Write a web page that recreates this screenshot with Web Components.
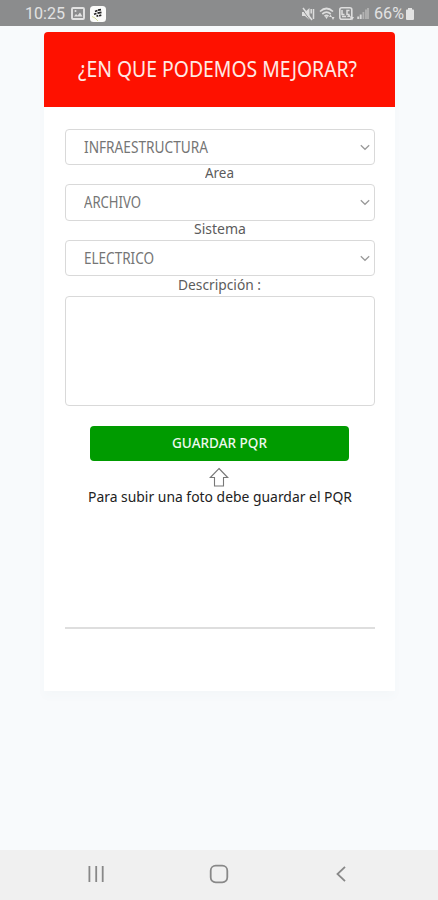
<!DOCTYPE html>
<html lang="es">
<head>
<meta charset="utf-8">
<title>PQR</title>
<style>
html,body{margin:0;height:100%;background:#f8fafc;overflow:hidden}
</style>
</head>
<body>
<pqr-app></pqr-app>
<script>
const define = (name, html, ready) => customElements.define(name, class extends HTMLElement {
  connectedCallback() {
    if (this.shadowRoot) return;
    this.attachShadow({ mode: 'open' }).innerHTML = html;
    if (ready) ready(this, this.shadowRoot);
  }
});

// Text condensed horizontally to the width in its "w" attribute.
define('fit-text', `<style>
:host{display:flex;white-space:nowrap;justify-content:flex-start}
span{display:block;flex:none;transform-origin:0 50%}
</style><span><slot></slot></span>`, (host, root) => {
  const span = root.querySelector('span'), w = +host.getAttribute('w');
  host.style.width = w + 'px';
  span.style.transform = `scaleX(${w / span.getBoundingClientRect().width})`;
});

define('status-bar', `<style>
:host{display:flex;height:26px;box-sizing:border-box;padding:1px 23px 0 25px;align-items:center;background:#8b8c8d;color:#e2e2e2;font:16px/25px Roboto,sans-serif}
svg{display:block;flex:none}
.sp{flex:1}
</style>
<fit-text w="40">10:25</fit-text>
<svg style="margin-left:6px" width="14" height="13" viewBox="0 0 14 13"><rect x="1" y="1" width="12" height="11" rx="1" fill="none" stroke="#e2e2e2" stroke-width="1.9"/><path d="M3 9.500l2-2.500 1.600 1.500L9 5.500l2.500 4z" fill="#e2e2e2"/><circle cx="4.500" cy="4" r="1" fill="#e2e2e2"/></svg>
<svg style="margin-left:5px" width="16" height="16" viewBox="0 0 16 16"><rect width="16" height="16" rx="3.500" fill="#fbfbfa"/><path d="M5 5.500l2.500-1M8 4.200l3-.6M4 8.300l2.500-.8M7.500 7.200l4-.8M6.500 10.300l1.700-.7M9 9.800l2.300-.7" stroke="#222" stroke-width="1.700"/><path d="M2 10.500l3 1.500 3 3" stroke="#d5dd9a" fill="none"/></svg>
<span class="sp"></span>
<svg width="14" height="14" viewBox="0 0 14 14"><path d="M1 5h3l4.500-4v12L4 9H1z" fill="#dedede"/><path d="M1 2l8 11" stroke="#8b8c8d" stroke-width="1"/><path d="M2 1l9 12M10.200 2v4.500M12.500 2v10" stroke="#dedede" stroke-width="1.500"/></svg>
<svg style="margin-left:4px" width="17" height="14" viewBox="0 0 17 14"><path d="M1 4.500Q7.500-1.500 14 4.500M3.300 7Q7.500 3.200 11.700 7M5.500 9.200q2-1.500 4 0" fill="none" stroke="#dedede" stroke-width="1.700"/><path d="M6 9.500h3L7.500 12zM10 10l1.500-2.500L13 10zM12.500 10h3L14 13z" fill="#dedede"/></svg>
<svg style="margin-left:3px" width="15" height="14" viewBox="0 0 15 14"><rect x=".8" y=".8" width="12" height="11.500" rx="2" fill="none" stroke="#dedede" stroke-width="1.600"/><path d="M3 3v4.500h2.500M10.500 3.500H8v4h2.500M3 9.500h4" fill="none" stroke="#dedede" stroke-width="1.500"/><path d="M8 10l2-2.800L12 10zM11 10h4l-2 3.500z" fill="#dedede"/></svg>
<svg style="margin-left:3px" width="12" height="13" viewBox="0 0 12 13"><path d="M1.200 12V9.500M3.700 12V7.500" stroke="#d8d8d8" stroke-width="1.900"/><path d="M6.400 12V5M9 12V2.500M11 12V1" stroke="#b2b2b2" stroke-width="1.800"/></svg>
<fit-text w="30" style="margin-left:5px">66%</fit-text>
<svg style="margin-left:1px" width="10" height="14" viewBox="0 0 10 14"><path d="M3 1h4v1.500h1.200q.8 0 .8.8V12q0 1-1 1H2q-1 0-1-1V3.300q0-.8.8-.8H3z" fill="#e2e2e2"/></svg>`);

define('card-header', `<style>
:host{display:flex;height:75px;box-sizing:border-box;padding:0 5px 2px 0;justify-content:center;align-items:center;background:#fe1100;color:#ffe9e4;border-radius:4px 4px 0 0;font-size:21.500px}
</style><fit-text w="279"><slot></slot></fit-text>`);

define('select-box', `<style>
:host{display:flex;height:36.500px;box-sizing:border-box;border:1px solid #d9d9d9;border-radius:4px;align-items:center;justify-content:space-between;padding:0 4px 0 18px;color:#757575;font-size:15.600px;background:#fff}
svg{display:block;margin-top:1px}
</style><slot></slot>
<svg width="10" height="7" viewBox="0 0 10 7"><path d="M.8 1.200L5 5.300 9.200 1.200" fill="none" stroke="#999" stroke-width="1.200"/></svg>`);

define('field-label', `<style>
:host{display:flex;height:19.200px;box-sizing:border-box;padding-bottom:3.500px;align-items:center;justify-content:center;color:#5c5c5c;font-size:13.600px}
</style><slot></slot>`);

define('text-area', `<style>
:host{display:block;height:110.500px;box-sizing:border-box;border:1px solid #d9d9d9;border-radius:4px;background:#fff}
</style>`);

define('save-button', `<style>
:host{display:flex;height:35.500px;box-sizing:border-box;padding-bottom:2px;margin:19.500px 26px 0 25px;align-items:center;justify-content:center;background:#009b00;color:#edf8ed;border-radius:4px;font-size:14.800px;font-weight:500}
</style><slot></slot>`);

define('photo-hint', `<style>
:host{display:flex;flex-direction:column;align-items:center;color:#222;font-size:13.800px;line-height:19px;padding-top:6px}
svg{display:block;margin-right:1px}
</style>
<svg width="20" height="20" viewBox="0 0 20 20"><path d="M10 1.500L18.700 10.500H14.500V19H5.500V10.500H1.300Z" fill="#fff" stroke="#777" stroke-width="1.100"/></svg>
<slot></slot>`);

define('pqr-card', `<style>
:host{display:flex;flex-direction:column;width:350.500px;height:659.500px;margin:5.500px 0 0 44.300px;background:#fff;border-radius:4px 4px 0 0;box-shadow:0 6px 9px rgba(90,110,130,.025)}
main{display:flex;flex-direction:column;padding:22px 20px 0 20.700px}
hr{width:100%;box-sizing:border-box;height:2px;border:0;background:#dedede;margin:121px 0 0}
</style>
<card-header>¿EN QUE PODEMOS MEJORAR?</card-header>
<main>
<select-box><fit-text w="124">INFRAESTRUCTURA</fit-text></select-box>
<field-label><fit-text w="29">Area</fit-text></field-label>
<select-box><fit-text w="57">ARCHIVO</fit-text></select-box>
<field-label><fit-text w="52">Sistema</fit-text></field-label>
<select-box><fit-text w="70">ELECTRICO</fit-text></select-box>
<field-label><fit-text w="83">Descripción :</fit-text></field-label>
<text-area></text-area>
<save-button><fit-text w="95">GUARDAR PQR</fit-text></save-button>
<photo-hint><fit-text w="264">Para subir una foto debe guardar el PQR</fit-text></photo-hint>
<hr>
</main>`);

define('nav-bar', `<style>
:host{display:flex;height:50px;box-sizing:border-box;padding:0 91px 2px 87px;align-items:center;justify-content:space-between;background:#f0f0f0}
svg{display:block;fill:none;stroke:#888}
.home{margin-right:3px}
</style>
<svg width="18" height="18" viewBox="0 0 18 18" stroke-width="1.800"><path d="M2.400 1v16M9.200 1v16M15.700 1v16"/></svg>
<svg class="home" width="20" height="20" viewBox="0 0 20 20" stroke-width="1.800"><rect x="1.700" y="1.700" width="16.600" height="16.600" rx="5"/></svg>
<svg width="12" height="18" viewBox="0 0 12 18" stroke-width="1.800"><path d="M10 1.800L2.500 9l7.500 7.200"/></svg>`);

define('pqr-app', `<style>
:host{display:flex;flex-direction:column;width:438px;height:900px;background:#f8fafc;font-family:"Noto Sans","Open Sans",sans-serif}
nav-bar{margin-top:auto}
</style>
<status-bar></status-bar><pqr-card></pqr-card><nav-bar></nav-bar>`);
</script>
</body>
</html>
